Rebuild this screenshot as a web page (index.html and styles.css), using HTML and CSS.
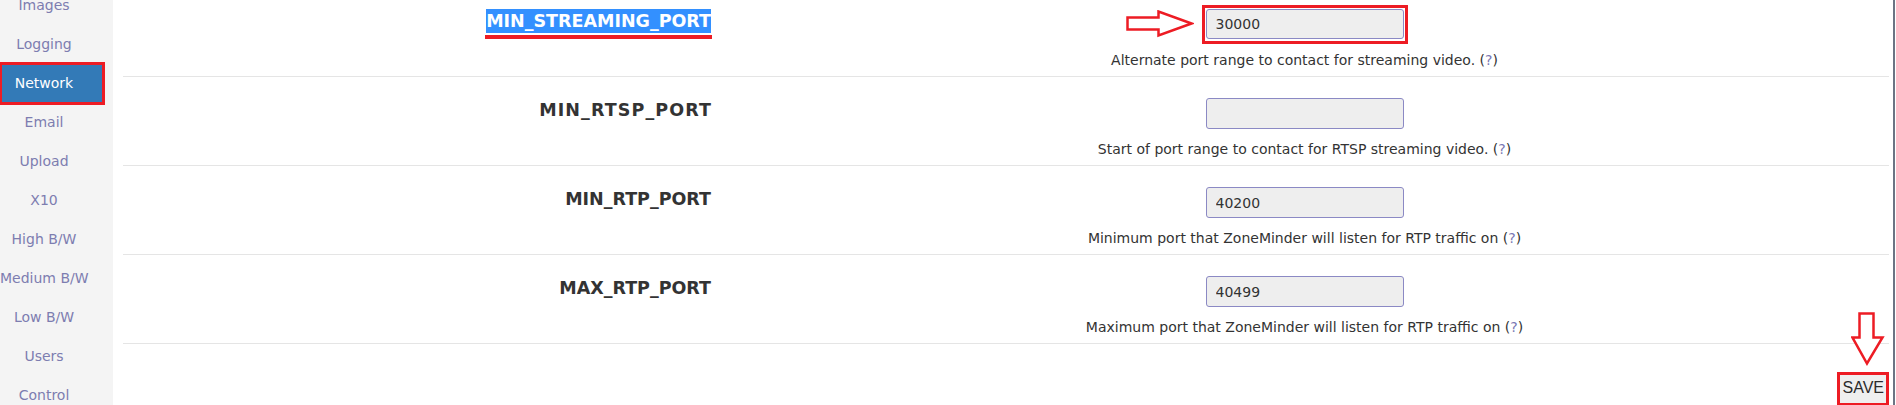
FILE: index.html
```html
<!DOCTYPE html>
<html lang="en">
<head>
<meta charset="utf-8">
<title>Options - Network</title>
<link rel="stylesheet" href="styles.css">
</head>
<body>
<div class="page">
  <aside class="sidebar">
    <ul class="nav">
      <li><a class="nav-link">Images</a></li>
      <li><a class="nav-link">Logging</a></li>
      <li><a class="nav-link active">Network</a></li>
      <li><a class="nav-link">Email</a></li>
      <li><a class="nav-link">Upload</a></li>
      <li><a class="nav-link">X10</a></li>
      <li><a class="nav-link">High B/W</a></li>
      <li><a class="nav-link">Medium B/W</a></li>
      <li><a class="nav-link">Low B/W</a></li>
      <li><a class="nav-link">Users</a></li>
      <li><a class="nav-link">Control</a></li>
    </ul>
  </aside>
  <main class="content">
    <div class="options">
      <div class="row">
        <div class="label"><span class="mark"><span class="sel">MIN_STREAMING_PORT</span></span></div>
        <div class="value">
          <span class="field field-marked">
            <svg class="arrow-right" width="68" height="28" viewBox="0 0 68 28"><path d="M1.5 7.5 H32.5 V1.5 L65.5 13.5 L32.5 25.5 V19.5 H1.5 Z" fill="#fff" stroke="#ed1c24" stroke-width="2.5" stroke-linejoin="miter"/></svg>
            <input class="input input-first" type="text" value="30000">
          </span>
          <p class="desc">Alternate port range to contact for streaming video. (<a class="help">?</a>)</p>
        </div>
      </div>
      <div class="row">
        <div class="label label-wide">MIN_RTSP_PORT</div>
        <div class="value">
          <span class="field"><input class="input" type="text" value=""></span>
          <p class="desc">Start of port range to contact for RTSP streaming video. (<a class="help">?</a>)</p>
        </div>
      </div>
      <div class="row">
        <div class="label">MIN_RTP_PORT</div>
        <div class="value">
          <span class="field"><input class="input" type="text" value="40200"></span>
          <p class="desc">Minimum port that ZoneMinder will listen for RTP traffic on (<a class="help">?</a>)</p>
        </div>
      </div>
      <div class="row">
        <div class="label">MAX_RTP_PORT</div>
        <div class="value">
          <span class="field"><input class="input" type="text" value="40499"></span>
          <p class="desc">Maximum port that ZoneMinder will listen for RTP traffic on (<a class="help">?</a>)</p>
        </div>
      </div>
    </div>
    <div class="actions">
      <span class="save-wrap">
        <svg class="arrow-down" width="34" height="56" viewBox="0 0 34 56"><path d="M8.5 1.5 H22.5 V25.5 H31.5 L16 51.5 L1.5 25.5 H8.5 Z" fill="#fff" stroke="#ed1c24" stroke-width="2.5" stroke-linejoin="miter"/></svg>
        <button class="save" type="button">SAVE</button>
      </span>
    </div>
  </main>
</div>
</body>
</html>
```
FILE: styles.css
```css
html, body {
  margin: 0;
  padding: 0;
  background: #fff;
  overflow: hidden;
}
body {
  font-family: "DejaVu Sans", Verdana, sans-serif;
  font-size: 14px;
  color: #333;
  padding-right: 1px;
  height: 405px;
}
.page {
  display: flex;
  height: 405px;
  border-right: 2px solid #6c7484;
}
.sidebar {
  width: 113px;
  flex: 0 0 113px;
  background: #f4f4f4;
  overflow: hidden;
}
.nav {
  list-style: none;
  margin: -14px 0 0 0;
  padding: 0;
}
.nav li {
  padding: 1px 0;
}
.nav-link {
  display: block;
  width: 102px;
  height: 37px;
  line-height: 37px;
  box-sizing: border-box;
  padding-right: 14px;
  text-align: center;
  white-space: nowrap;
  font-size: 14px;
  color: #7d7db0;
}
.nav-link.active {
  background: #337ab7;
  color: #fff;
  box-shadow: 0 0 0 3px #ed1c24, inset 2px 0 0 #ed1c24;
}
.content {
  flex: 1;
  padding: 0 4px 0 10px;
  min-width: 0;
}
.options {
  margin-top: -12px;
}
.row {
  display: grid;
  grid-template-columns: 597px 1fr;
  height: 89px;
  box-sizing: border-box;
  border-bottom: 1px solid #e5e5e5;
}
.label {
  text-align: right;
  padding: 23px 9px 0 0;
  font-weight: bold;
  font-size: 17.5px;
  color: #333;
  white-space: nowrap;
}
.label-wide {
  letter-spacing: 1.1px;
  padding-right: 8px;
}
.mark {
  padding: 0 1px 4px 1px;
  margin-right: -1px;
  border-bottom: 4px solid #ed1c24;
}
.sel {
  background: #3390ff;
  color: #fff;
  padding: 2px 0;
}
.value {
  text-align: center;
  padding-top: 21px;
}
.field {
  position: relative;
  display: inline-block;
  vertical-align: top;
}
.field-marked {
  outline: 3px solid #ed1c24;
  outline-offset: 1px;
}
.input {
  display: block;
  width: 198px;
  height: 31px;
  box-sizing: border-box;
  border: 1px solid #8b89c4;
  border-radius: 3px;
  background: #eeeeee;
  padding: 0 9px;
  font-family: "DejaVu Sans", Verdana, sans-serif;
  font-size: 14px;
  color: #333;
  margin: 0;
}
.input-first {
  height: 30px;
  margin-bottom: 1px;
}
.arrow-right {
  position: absolute;
  left: -80px;
  top: 1px;
}
.desc {
  margin: 12px 0 0 0;
  line-height: 17px;
  font-size: 14px;
  color: #333;
  white-space: nowrap;
}
.help {
  color: #7a78b4;
}
.actions {
  text-align: right;
  margin-top: 28px;
}
.save-wrap {
  position: relative;
  display: inline-block;
}
.save {
  font-family: "Liberation Sans", Arial, sans-serif;
  font-size: 16px;
  color: #2b2b2b;
  background: #efefef;
  border: 3px solid #ed1c24;
  padding: 4px 2px 6px 3px;
  margin: 0;
  line-height: 18px;
}
.arrow-down {
  position: absolute;
  left: 14px;
  top: -60px;
}
```
